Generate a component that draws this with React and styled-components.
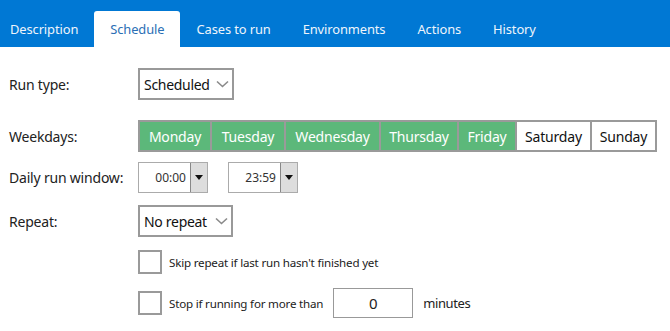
import React, { useState } from 'react'
import styled, { createGlobalStyle } from 'styled-components'

const GlobalStyle = createGlobalStyle`
    html, body {
        margin: 0;
        padding: 0;
        background: #fff;
    }
    body {
        font-family: "Noto Sans", "Open Sans", sans-serif;
        color: #222;
    }
`;

const tabs = ['Description', 'Schedule', 'Cases to run', 'Environments', 'Actions', 'History'];
const days = [
    { name: 'Monday', on: true, w: 70 },
    { name: 'Tuesday', on: true, w: 72 },
    { name: 'Wednesday', on: true, w: 93 },
    { name: 'Thursday', on: true, w: 76 },
    { name: 'Friday', on: true, w: 56 },
    { name: 'Saturday', on: false, w: 73 },
    { name: 'Sunday', on: false, w: 63 },
];

const Page = styled.div`
    width: 670px;
    height: 331px;
    overflow: hidden;
`;

const TabBar = styled.div`
    display: flex;
    align-items: flex-end;
    height: 47px;
    background: #0078d4;
`;

const Tab = styled.div`
    display: flex;
    align-items: center;
    justify-content: center;
    height: 36px;
    padding: 0 16px;
    font-size: 12.9px;
    letter-spacing: -0.1px;
    color: ${({ active }) => (active ? '#2b6fb5' : '#eef4fb')};
    background: ${({ active }) => (active ? '#fff' : 'transparent')};
    border-radius: 3px 3px 0 0;
    cursor: pointer;

    &:first-child {
        padding-left: 10px;
    }
`;

const Form = styled.div`
    display: flex;
    flex-direction: column;
    padding: 21px 0 0 9px;
`;

const Row = styled.div`
    display: flex;
    align-items: center;
    margin-bottom: ${({ gap }) => gap}px;
`;

const Label = styled.div`
    width: 129px;
    flex-shrink: 0;
    font-size: 14px;
    letter-spacing: -0.2px;
    color: #222;
`;

const Select = styled.div`
    display: flex;
    align-items: center;
    justify-content: space-between;
    box-sizing: border-box;
    width: ${({ w }) => w}px;
    height: 32px;
    padding: 0 3px 0 4px;
    border: 2px solid #999;
    font-size: 14px;
    letter-spacing: -0.3px;
    color: #111;
    background: #fff;
`;

const Chevron = () => (
    <svg width="13" height="8" viewBox="0 0 13 8">
        <polyline points="1,1.5 6.5,6.5 12,1.5" fill="none" stroke="#8a8a8a" strokeWidth="1.6" />
    </svg>
);

const DayStrip = styled.div`
    display: flex;
    box-sizing: border-box;
    height: 32px;
    border: 2px solid #9a9a9a;
    background: #9a9a9a;
    gap: 2px;
`;

const Day = styled.div`
    display: flex;
    align-items: center;
    justify-content: center;
    width: ${({ w }) => w}px;
    font-size: 14px;
    letter-spacing: -0.2px;
    color: ${({ on }) => (on ? '#fff' : '#111')};
    background: ${({ on }) => (on ? '#5cb87a' : '#fff')};
    cursor: pointer;
`;

const TimeBox = styled.div`
    display: flex;
    box-sizing: border-box;
    width: 70px;
    height: 31px;
    border: 1px solid #ababab;
    background: #fff;
    margin-right: 20px;
`;

const TimeText = styled.div`
    flex: 1;
    display: flex;
    align-items: center;
    justify-content: flex-end;
    padding-right: 4px;
    font-size: 12px;
    color: #333;
`;

const TimeButton = styled.div`
    display: flex;
    align-items: center;
    justify-content: center;
    width: 16px;
    background: #ddd;
    border-left: 1px solid #888;
`;

const Triangle = styled.div`
    width: 0;
    height: 0;
    border-left: 4px solid transparent;
    border-right: 4px solid transparent;
    border-top: 5px solid #111;
`;

const Indent = styled.div`
    width: 129px;
    flex-shrink: 0;
`;

const Check = styled.div`
    box-sizing: border-box;
    width: 24px;
    height: 24px;
    border: 2px solid #9a9a9a;
    background: #fff;
    margin-right: 7px;
    flex-shrink: 0;
`;

const CheckText = styled.div`
    font-size: 11.6px;
    letter-spacing: -0.2px;
    color: #222;
`;

const NumberBox = styled.div`
    display: flex;
    align-items: center;
    justify-content: center;
    box-sizing: border-box;
    width: 80px;
    height: 30px;
    margin: 0 10px 0 10px;
    border: 1px solid #999;
    font-size: 15px;
    color: #222;
`;

const Unit = styled.div`
    font-size: 13px;
    letter-spacing: -0.4px;
    color: #222;
`;

const App = () => {
    const [active, setActive] = useState('Schedule');

    return (
        <Page>
            <GlobalStyle />
            <TabBar>
                {tabs.map((t) => (
                    <Tab key={t} active={t === active} onClick={() => setActive(t)}>{t}</Tab>
                ))}
            </TabBar>

            <Form>
                <Row gap={20}>
                    <Label>Run type:</Label>
                    <Select w={96}>Scheduled<Chevron /></Select>
                </Row>

                <Row gap={10}>
                    <Label>Weekdays:</Label>
                    <DayStrip>
                        {days.map((d) => (
                            <Day key={d.name} on={d.on} w={d.w}>{d.name}</Day>
                        ))}
                    </DayStrip>
                </Row>

                <Row gap={12}>
                    <Label>Daily run window:</Label>
                    <TimeBox>
                        <TimeText>00:00</TimeText>
                        <TimeButton><Triangle /></TimeButton>
                    </TimeBox>
                    <TimeBox>
                        <TimeText>23:59</TimeText>
                        <TimeButton><Triangle /></TimeButton>
                    </TimeBox>
                </Row>

                <Row gap={13}>
                    <Label>Repeat:</Label>
                    <Select w={95}>No repeat<Chevron /></Select>
                </Row>

                <Row gap={14}>
                    <Indent />
                    <Check />
                    <CheckText>Skip repeat if last run hasn't finished yet</CheckText>
                </Row>

                <Row gap={0}>
                    <Indent />
                    <Check />
                    <CheckText>Stop if running for more than</CheckText>
                    <NumberBox>0</NumberBox>
                    <Unit>minutes</Unit>
                </Row>
            </Form>
        </Page>
    )
}

export default App
